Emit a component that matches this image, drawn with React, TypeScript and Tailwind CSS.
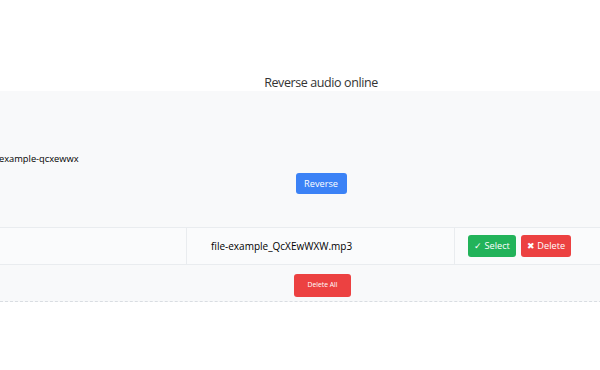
const files = [{ id: 1, name: "file-example_QcXEwWXW.mp3" }];

const App = () => {
  return (
    <div className="w-[600px] h-[370px] overflow-hidden bg-white font-['Open_Sans',sans-serif]">
      <div className="w-[642px]">
        <h1 className="pt-[74px] h-[91px] text-center text-[12.5px] leading-[18px] tracking-[-0.4px] text-[#333]">
          Reverse audio online
        </h1>
        <div className="bg-[#f8f9fa] border-b border-dashed border-[#d9dde2]">
          <div className="h-[136px] flex flex-col">
            <p className="mt-[61px] -ml-[1px] text-[9.3px] leading-[14px] text-black">
              example-qcxewwx
            </p>
            <div className="mt-[7px] flex justify-center">
              <button className="h-[21px] w-[51px] rounded-[3px] bg-[#3b82f6] text-white text-[9.2px] leading-[21px]">
                Reverse
              </button>
            </div>
          </div>
          {files.map((file) => (
            <div
              key={file.id}
              className="grid grid-cols-[187px_268px_187px] h-[38px] border-y border-[#e9ecef] bg-[#fafbfc]"
            >
              <div className="border-r border-[#e9ecef]" />
              <div className="border-r border-[#e9ecef] flex items-center pl-[24px] text-[10px] text-black">
                {file.name}
              </div>
              <div className="flex items-center gap-[5px] pl-[13px]">
                <button className="h-[22px] w-[48px] rounded-[3px] bg-[#22b35a] text-white text-[9.2px]">
                  ✓ Select
                </button>
                <button className="h-[22px] w-[50px] rounded-[3px] bg-[#ec4141] text-white text-[9.2px]">
                  ✖ Delete
                </button>
              </div>
            </div>
          ))}
          <div className="flex justify-center pt-[9px] pb-[4px]">
            <button className="h-[23px] w-[57px] ml-[3px] rounded-[3px] bg-[#ec4141] text-white text-[6.8px]">
              Delete All
            </button>
          </div>
        </div>
      </div>
    </div>
  );
};

export default App;
